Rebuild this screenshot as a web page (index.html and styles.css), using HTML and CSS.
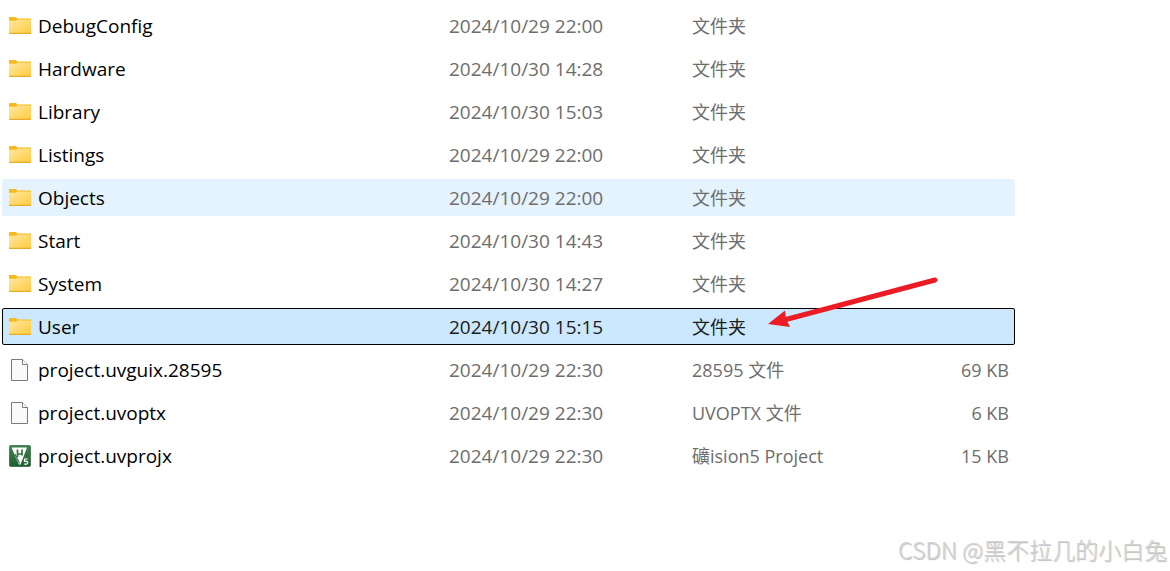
FILE: index.html
```html
<!DOCTYPE html>
<html lang="zh-CN">
<head>
    <meta charset="UTF-8">
    <meta name="viewport" content="width=device-width, initial-scale=1.0">
    <title>project</title>
    <link rel="stylesheet" href="styles.css">
</head>
<body>
    <!-- Icon shapes shared by the rows -->
    <svg class="sprite" aria-hidden="true">
        <defs>
            <linearGradient id="folder-fill" x1="0" y1="0" x2="1" y2="1">
                <stop offset="0" stop-color="#ffe8a2"/>
                <stop offset="1" stop-color="#ffcb3d"/>
            </linearGradient>
            <linearGradient id="keil-fill" x1="0" y1="0" x2="0" y2="1">
                <stop offset="0" stop-color="#3e8050"/>
                <stop offset="1" stop-color="#20602f"/>
            </linearGradient>
            <symbol id="folder" viewBox="0 1 22 22">
                <path d="M0 3.6Q0 3 .8 3H7l1.3 1.6H22V10H0z" fill="#f8b91c"/>
                <path d="M0 6.7h7L8.5 5.5H21.4q.6 0 .6.6V19q0 .7-.7.7H.7Q0 19.7 0 19z" fill="url(#folder-fill)"/>
                <path d="M0 18.7h22v.3q0 1-.8 1H.8Q0 20 0 19z" fill="#e8ac27"/>
            </symbol>
            <symbol id="file" viewBox="0 0 22 22">
                <path d="M2.5 .5h11l5 5v16h-16z" fill="#fafafa" stroke="#7b7b7b"/>
                <path d="M13.5 .5v5h5" fill="#fff" stroke="#7b7b7b"/>
            </symbol>
            <symbol id="keil" viewBox="0 0 22 22">
                <rect x=".3" y=".3" width="21.4" height="21.4" rx="2" fill="url(#keil-fill)" stroke="#2a6339" stroke-width=".6"/>
                <path d="M2.5 2.5h15.500L11.500 19.5h-1.700z" fill="#fff"/>
                <path d="M8.500 4.500v7.500M8.500 9h4.500M13 4.500v6" fill="none" stroke="#2f7040" stroke-width="1.700"/>
                <path d="M6 9l4.500 9.500" fill="none" stroke="#2f7040" stroke-width="1.200"/>
                <path d="M18.700 14h-3.200v2.300q3.200-.6 3.200 1.300 0 2-3.500 1.500" fill="none" stroke="#fff" stroke-width="1.200"/>
            </symbol>
        </defs>
    </svg>

    <table class="files">
        <colgroup>
            <col class="col-name">
            <col class="col-date">
            <col class="col-type">
            <col class="col-size">
        </colgroup>
        <tbody>
            <tr>
                <td><div class="name"><svg class="icon"><use href="#folder"/></svg><span>DebugConfig</span></div></td>
                <td class="date">2024/10/29 22:00</td>
                <td class="type">文件夹</td>
                <td class="size"></td>
            </tr>
            <tr>
                <td><div class="name"><svg class="icon"><use href="#folder"/></svg><span>Hardware</span></div></td>
                <td class="date">2024/10/30 14:28</td>
                <td class="type">文件夹</td>
                <td class="size"></td>
            </tr>
            <tr>
                <td><div class="name"><svg class="icon"><use href="#folder"/></svg><span>Library</span></div></td>
                <td class="date">2024/10/30 15:03</td>
                <td class="type">文件夹</td>
                <td class="size"></td>
            </tr>
            <tr>
                <td><div class="name"><svg class="icon"><use href="#folder"/></svg><span>Listings</span></div></td>
                <td class="date">2024/10/29 22:00</td>
                <td class="type">文件夹</td>
                <td class="size"></td>
            </tr>
            <tr class="hovered">
                <td><div class="name"><svg class="icon"><use href="#folder"/></svg><span>Objects</span></div></td>
                <td class="date">2024/10/29 22:00</td>
                <td class="type">文件夹</td>
                <td class="size"></td>
            </tr>
            <tr>
                <td><div class="name"><svg class="icon"><use href="#folder"/></svg><span>Start</span></div></td>
                <td class="date">2024/10/30 14:43</td>
                <td class="type">文件夹</td>
                <td class="size"></td>
            </tr>
            <tr>
                <td><div class="name"><svg class="icon"><use href="#folder"/></svg><span>System</span></div></td>
                <td class="date">2024/10/30 14:27</td>
                <td class="type">文件夹</td>
                <td class="size"></td>
            </tr>
            <tr class="selected">
                <td><div class="name"><svg class="icon"><use href="#folder"/></svg><span>User</span></div></td>
                <td class="date">2024/10/30 15:15</td>
                <td class="type">
                    <div class="pointed">文件夹
                        <svg class="arrow" viewBox="0 0 172 52" aria-hidden="true">
                            <path d="M167 5L16 45" stroke="#ed1c24" stroke-width="5" stroke-linecap="round"/>
                            <path d="M0 49L17 35.5L18 44L22 52z" fill="#ed1c24"/>
                        </svg>
                    </div>
                </td>
                <td class="size"></td>
            </tr>
            <tr>
                <td><div class="name"><svg class="icon"><use href="#file"/></svg><span>project.uvguix.28595</span></div></td>
                <td class="date">2024/10/29 22:30</td>
                <td class="type">28595 文件</td>
                <td class="size">69 KB</td>
            </tr>
            <tr>
                <td><div class="name"><svg class="icon"><use href="#file"/></svg><span>project.uvoptx</span></div></td>
                <td class="date">2024/10/29 22:30</td>
                <td class="type">UVOPTX 文件</td>
                <td class="size">6 KB</td>
            </tr>
            <tr>
                <td><div class="name"><svg class="icon"><use href="#keil"/></svg><span>project.uvprojx</span></div></td>
                <td class="date">2024/10/29 22:30</td>
                <td class="type">礦ision5 Project</td>
                <td class="size">15 KB</td>
            </tr>
        </tbody>
    </table>

    <footer class="watermark">CSDN @黑不拉几的小白兔</footer>
</body>
</html>
```
FILE: styles.css
```css
* {
    box-sizing: border-box;
}

body {
    display: flex;
    flex-direction: column;
    min-height: 100vh;
    margin: 0;
    padding: 1px 2px 6px;
    background-color: #fff;
    color: #6d6d6d;
    font-family: "Open Sans", "Noto Sans CJK SC", sans-serif;
    font-size: 19px;
    line-height: 35px;
}

.sprite {
    position: absolute;
    width: 0;
    height: 0;
}

.files {
    width: calc(100% - 153px);
    table-layout: fixed;
    border-collapse: separate;
    border-spacing: 0 6px;
}

.col-name {
    width: 447px;
}

.col-date {
    width: 243px;
}

.col-size {
    width: 120px;
}

td {
    height: 37px;
    padding: 0;
    white-space: nowrap;
}

td:first-child {
    padding-left: 7px;
    border-radius: 2px 0 0 2px;
}

td:last-child {
    border-radius: 0 2px 2px 0;
}

.name {
    display: flex;
    align-items: center;
    gap: 7px;
    height: 37px;
    color: #000;
}

.name span,
.date,
.type,
.size {
    padding-top: 2px;
}

.icon {
    width: 22px;
    height: 22px;
}

.type,
.size {
    font-size: 18px;
}

.size {
    padding-right: 6px;
    text-align: right;
}

.hovered td {
    background-color: #e5f3ff;
}

.selected {
    color: #1b1b1b;
    border-radius: 2px;
    outline: 1px solid #000;
    outline-offset: -1px;
}

.selected td {
    background-color: #cce8ff;
}

.pointed {
    position: relative;
}

/* Red arrow pointing at the selected row */
.arrow {
    position: absolute;
    left: 76px;
    bottom: 18px;
    z-index: 1;
    width: 172px;
    height: 52px;
    fill: none;
}

.watermark {
    margin-top: auto;
    padding-right: 1px;
    color: #d2d2d2;
    font-family: "Noto Sans CJK SC", sans-serif;
    font-size: 23px;
    font-weight: 300;
    line-height: 32px;
    text-align: right;
    text-shadow: 1px 1px 1px #bbb;
}
```
